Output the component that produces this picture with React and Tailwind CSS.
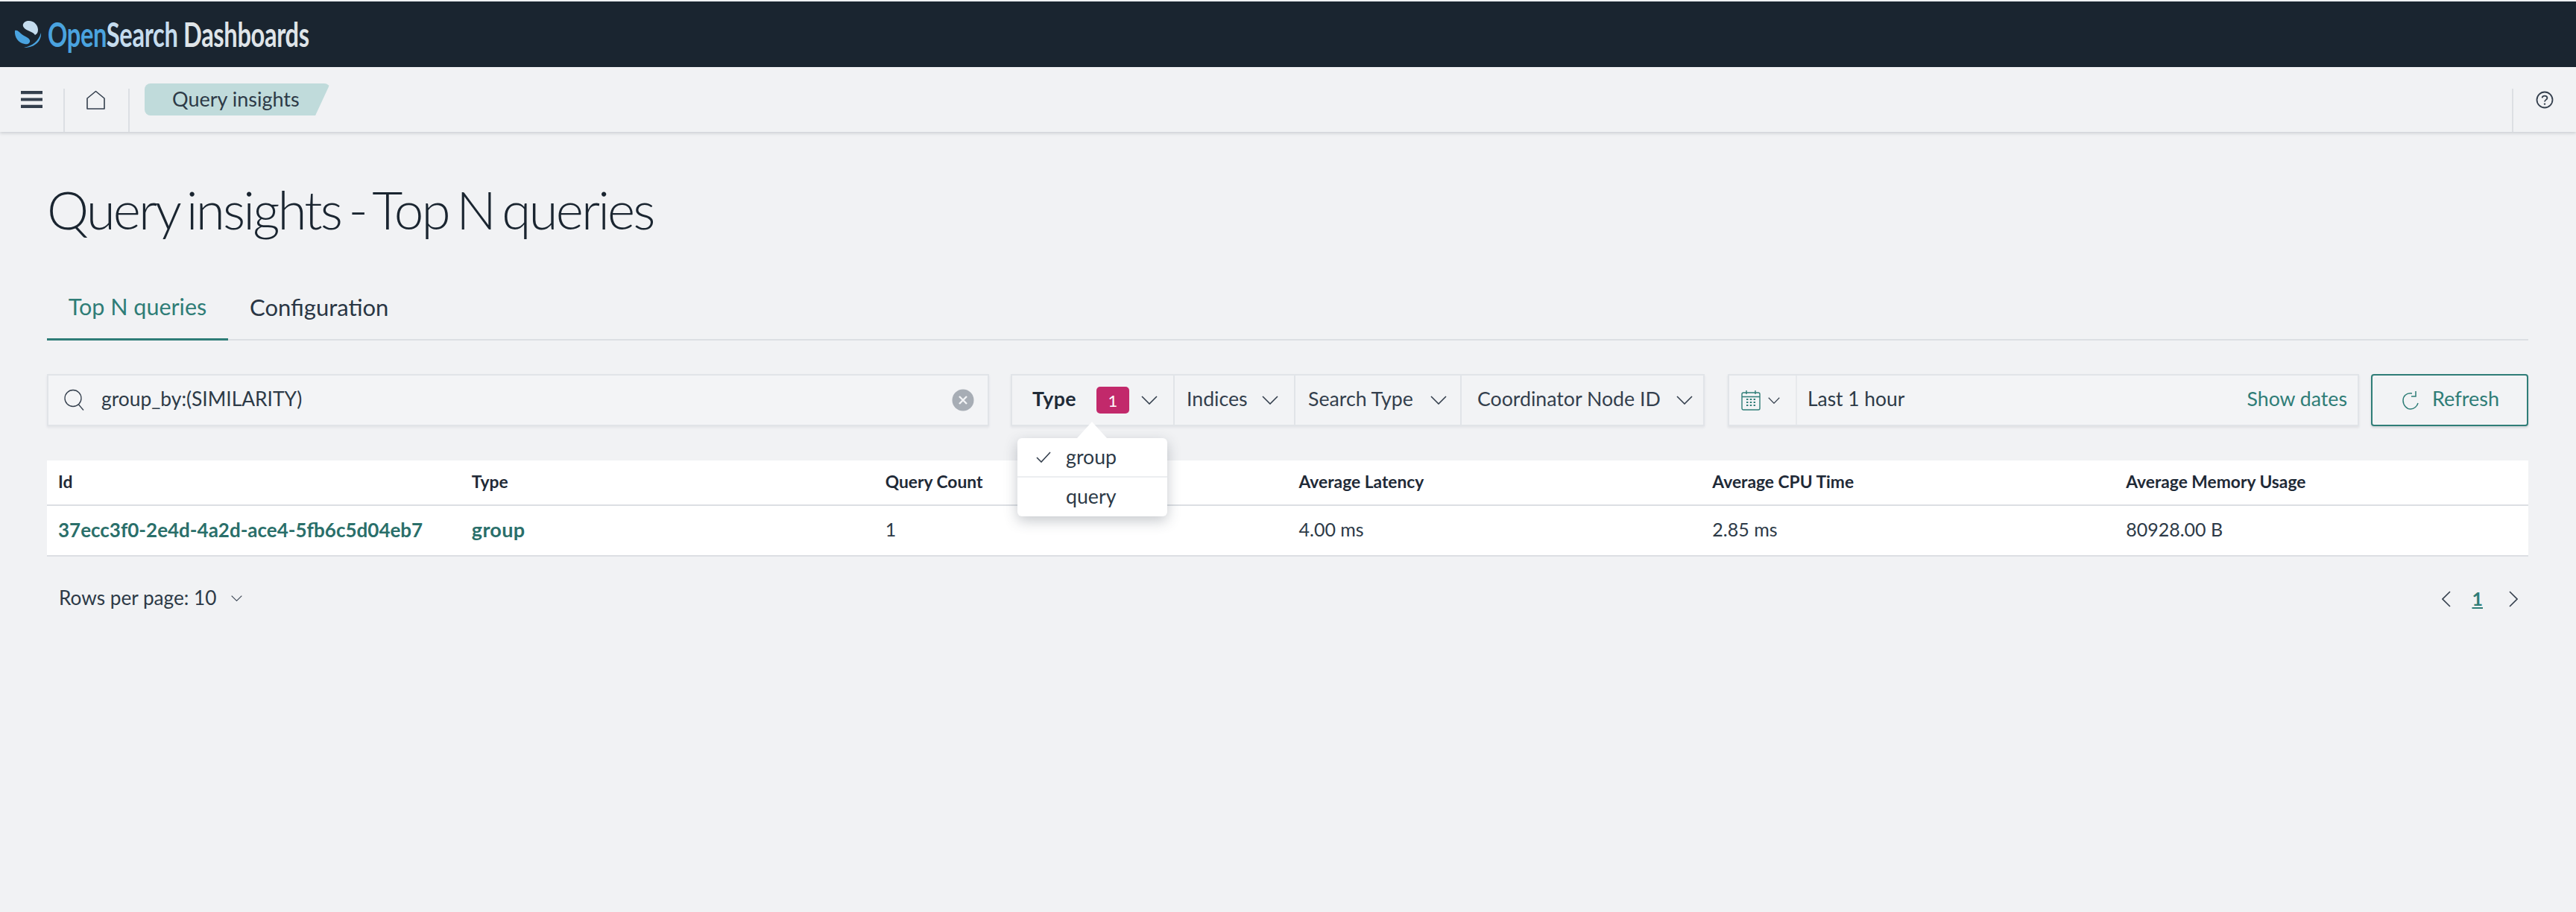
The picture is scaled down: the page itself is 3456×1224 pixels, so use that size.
const FONT = "font-['Lato','Liberation_Sans',sans-serif]";

function Chevron({ className = "", w = 22, h = 12 }) {
  return (
    <svg width={w} height={h} viewBox="0 0 22 12" fill="none" stroke="#343f4d" strokeWidth="1.6" preserveAspectRatio="none" className={className}>
      <path d="M1 1 L11 11 L21 1" />
    </svg>
  );
}

function Logo() {
  return (
    <svg width="38" height="38" viewBox="0 0 38 38" fill="none">
      <path d="M18 1 C26 0 32 6 32 13 C32 17 30 19 28 20 C25 15 17 15 13 10 C10 6 13 2 18 1 Z" fill="#c5dcee" />
      <path d="M1 14 C4 13 6 15 9 18 C13 22 20 23 21 27 C22 31 18 33 14 32 C6 31 0 23 1 14 Z" fill="#4aa3df" />
      <path d="M36 17 C37 27 29 37 13 37 C24 35 33 28 36 17 Z" fill="#4aa3df" />
    </svg>
  );
}

function Filter({ label, w, pl, gap, bold, badge, border = true }) {
  return (
    <div className={`flex h-full items-center ${w} ${pl} ${border ? "border-l-2 border-[#e1e4e8]" : ""}`}>
      <span className={`${bold ? "font-bold tracking-[0.4px] text-[#1f2a37]" : "text-[#343f4d]"} pb-[3px] text-[26.7px] leading-none`}>{label}</span>
      {badge && (
        <span className="ml-[27px] flex h-[36px] w-[44px] items-center justify-center rounded-[5px] bg-[#c2296b] text-[22px] text-white">{badge}</span>
      )}
      <Chevron className={gap} />
    </div>
  );
}

export default function App() {
  return (
    <div className={`${FONT} relative flex h-[1224px] w-[3456px] flex-col overflow-hidden bg-[#f1f2f4] text-[#343f4d]`}>
      <div className="h-[2px] bg-[#eef0f2]" />
      <header className="flex h-[88px] items-center bg-[#1a2530] pl-[19px]">
        <Logo />
        <div className="ml-[7px] w-[353px] origin-left scale-x-[0.71] whitespace-nowrap text-[46px] font-bold leading-none tracking-[-0.5px]">
          <span className="text-[#4aa3df]">Open</span>
          <span className="text-[#c5dcee]">Search</span>
          <span className="text-[#dfe4e8]"> Dashboards</span>
        </div>
      </header>
      <div className="relative z-10 flex h-[87px] items-stretch bg-[#f1f2f4] shadow-[0_2px_4px_rgba(60,70,85,0.2)]">
        <div className="flex w-[85px] items-start justify-center pt-[32px]">
          <svg width="29" height="23" viewBox="0 0 29 23" className="mr-[1px]">
            <path d="M0 2.2h29M0 11.5h29M0 20.8h29" stroke="#343f4d" strokeWidth="4.2" />
          </svg>
        </div>
        <div className="mt-[29px] flex w-[87px] justify-center border-l-2 border-[#dcdfe3] pr-[3px] pt-[2px]">
          <svg width="25" height="27" viewBox="0 0 25 27" fill="none">
            <path d="M12.5 1.5 L24 11 V25 H1 V11 Z" stroke="#343f4d" strokeWidth="1.6" strokeLinejoin="round" />
          </svg>
        </div>
        <div className="mt-[29px] border-l-2 border-[#dcdfe3]" />
        <div className="ml-[20px] mt-[22px] h-[43px] w-[249px] rounded-[8px] bg-[#c0dbdb] pl-[37px] text-[27px] leading-[42px] text-[#2d3a47] [clip-path:polygon(0_0,100%_0,92%_100%,0_100%)]">
          Query insights
        </div>
        <div className="ml-auto mt-[29px] flex w-[86px] justify-center border-l-2 border-[#dcdfe3] pt-[3px]">
          <svg width="24" height="24" viewBox="0 0 24 24" fill="none">
            <circle cx="12" cy="12" r="10.5" stroke="#343f4d" strokeWidth="1.8" />
            <path d="M8.6 9.4 C8.8 5.6 15.2 5.6 15.4 9.4 C15.4 12 12 11.8 12 14.6" stroke="#343f4d" strokeWidth="1.8" />
            <circle cx="12" cy="17.6" r="1.2" fill="#343f4d" />
          </svg>
        </div>
      </div>

      <main className="flex flex-col pl-[63px] pr-[64px]">
        <h1 className="mt-[54px] h-[100px] whitespace-nowrap text-[71px] font-light leading-[100px] tracking-[-2.85px] text-[#1a2530] [word-spacing:-6px]">Query insights - Top N queries</h1>

        <div className="mt-[38px] flex h-[88px] border-b-2 border-[#dcdfe3]">
          <div className="-mb-[2px] flex w-[243px] items-center justify-center border-b-[3px] border-[#2f7d77] text-[30.5px] text-[#2f7d77]">Top N queries</div>
          <div className="ml-[29px] flex items-center text-[31px] text-[#2a3644]">Configuration</div>
        </div>

        <div className="mt-[45px] flex h-[70px] items-stretch">
          <div className="flex w-[1264px] items-center border-2 border-[#e1e4e8] bg-[#f3f4f6] pl-[20px] shadow-[0_2px_3px_rgba(60,70,85,0.08)]">
            <svg width="30" height="30" viewBox="0 0 30 30" fill="none">
              <circle cx="13" cy="12.5" r="11" stroke="#343f4d" strokeWidth="1.3" />
              <path d="M20.5 21 L27 28.5" stroke="#343f4d" strokeWidth="1.3" />
            </svg>
            <span className="ml-[21px] pb-[3px] text-[26.4px] text-[#2d3a47]">group_by:(SIMILARITY)</span>
            <svg width="30" height="30" viewBox="0 0 30 30" className="ml-auto mr-[18px]">
              <circle cx="15" cy="15" r="14.5" fill="#a7adb5" />
              <path d="M10 10 L20 20 M20 10 L10 20" stroke="#f3f4f6" strokeWidth="2.4" />
            </svg>
          </div>

          <div className="relative ml-[29px] flex w-[931px] items-center border-2 border-[#e1e4e8] bg-[#f2f3f5] shadow-[0_2px_3px_rgba(60,70,85,0.08)]">
            <Filter label="Type" w="w-[216px]" pl="pl-[27px]" gap="ml-[16px]" bold badge="1" border={false} />
            <Filter label="Indices" w="w-[162px]" pl="pl-[16px]" gap="ml-[19px]" />
            <Filter label="Search Type" w="w-[223px]" pl="pl-[17px]" gap="ml-[23px]" />
            <Filter label="Coordinator Node ID" w="w-[326px]" pl="pl-[21px]" gap="ml-[21px]" />

            <div className="absolute left-[7px] top-[84px] z-20 h-[105px] w-[201px] rounded-[6px] bg-white shadow-[0_6px_18px_rgba(50,60,75,0.28)]">
              <div className="absolute -top-[22px] left-[80px] h-0 w-0 border-x-[20px] border-b-[22px] border-x-transparent border-b-white" />
              <div className="flex h-[53px] items-center border-b-2 border-[#eceef0] pl-[25px] text-[26.7px] text-[#2d3a47]">
                <svg width="20" height="15" viewBox="0 0 20 15" fill="none">
                  <path d="M1 8 L7 14 L19 1" stroke="#343f4d" strokeWidth="1.6" />
                </svg>
                <span className="ml-[20px]">group</span>
              </div>
              <div className="flex h-[52px] items-center pl-[65px] pb-[2px] text-[26.7px] text-[#2d3a47]">query</div>
            </div>
          </div>

          <div className="ml-[31px] flex w-[847px] items-stretch border-2 border-[#e1e4e8] bg-[#f3f4f6] shadow-[0_2px_3px_rgba(60,70,85,0.1)]">
            <div className="flex w-[91px] items-center border-r-2 border-[#e8eaed] pl-[16px]">
              <svg width="26" height="28" viewBox="0 0 26 28" fill="none" stroke="#2f7d77" strokeWidth="1.4">
                <rect x="1" y="4" width="24" height="23" rx="2" />
                <path d="M1 9.5h24M7 1v5M19 1v5" />
                <path d="M7 13h12M7 17h12M7 21h12" strokeDasharray="2.4 2.4" strokeWidth="2" />
              </svg>
              <Chevron w={16} h={9} className="ml-[10px]" />
            </div>
            <span className="ml-[14px] self-center pb-[3px] text-[26.4px] text-[#2d3a47]">Last 1 hour</span>
            <span className="ml-auto mr-[14px] self-center pb-[3px] text-[26.7px] text-[#2f7d77]">Show dates</span>
          </div>

          <div className="ml-[16px] flex w-[211px] items-center justify-center gap-[18px] rounded-[4px] border-2 border-[#2f7d77] bg-[#f2f3f5] pl-[3px] text-[27px] text-[#2f7d77] shadow-[0_2px_3px_rgba(60,70,85,0.18)]">
            <svg width="22" height="26" viewBox="0 0 22 26" fill="none" stroke="#2f7d77" strokeWidth="1.5">
              <path d="M13 4 C5 3 1 8 1 13.5 C1 20 6 25 11 25 C16 25 20 21 21 17" />
              <path d="M18 1 V8 H12" />
            </svg>
            <span className="pb-[3px]">Refresh</span>
          </div>
        </div>

        <div className="mt-[46px] bg-white">
          <div className="grid h-[61px] grid-cols-6 items-center border-b-2 border-[#dcdfe3] pb-[2px] text-[22.8px] font-bold text-[#1f2a37]">
            <div className="pl-[15px]">Id</div>
            <div className="pl-[15px]">Type</div>
            <div className="pl-[15px]">Query Count</div>
            <div className="pl-[15px]">Average Latency</div>
            <div className="pl-[15px]">Average CPU Time</div>
            <div className="pl-[15px]">Average Memory Usage</div>
          </div>
          <div className="grid h-[68px] grid-cols-6 items-center border-b-2 border-[#dcdfe3] pb-[2px] text-[25px] text-[#2d3a47]">
            <div className="whitespace-nowrap pl-[15px] text-[26px] font-bold text-[#2a6f6a]">37ecc3f0-2e4d-4a2d-ace4-5fb6c5d04eb7</div>
            <div className="pl-[15px] text-[27px] font-bold tracking-[0.3px] text-[#2a6f6a]">group</div>
            <div className="pl-[15px]">1</div>
            <div className="pl-[15px]">4.00 ms</div>
            <div className="pl-[15px]">2.85 ms</div>
            <div className="pl-[15px]">80928.00 B</div>
          </div>
        </div>

        <div className="mt-[24px] flex h-[66px] items-center justify-between pl-[16px] pr-[14px]">
          <div className="flex items-center pb-[2px] text-[26.2px] text-[#2d3a47]">
            <span>Rows per page: 10</span>
            <Chevron w={15} h={8} className="ml-[20px]" />
          </div>
          <div className="flex items-center">
            <svg width="12" height="22" viewBox="0 0 12 22" fill="none" stroke="#343f4d" strokeWidth="1.6">
              <path d="M11 1 L1 11 L11 21" />
            </svg>
            <span className="ml-[28px] pb-[2px] text-[25px] font-bold leading-none text-[#2f7d77] underline">1</span>
            <svg width="12" height="22" viewBox="0 0 12 22" fill="none" stroke="#343f4d" strokeWidth="1.6" className="ml-[35px]">
              <path d="M1 1 L11 11 L1 21" />
            </svg>
          </div>
        </div>
      </main>
    </div>
  );
}
